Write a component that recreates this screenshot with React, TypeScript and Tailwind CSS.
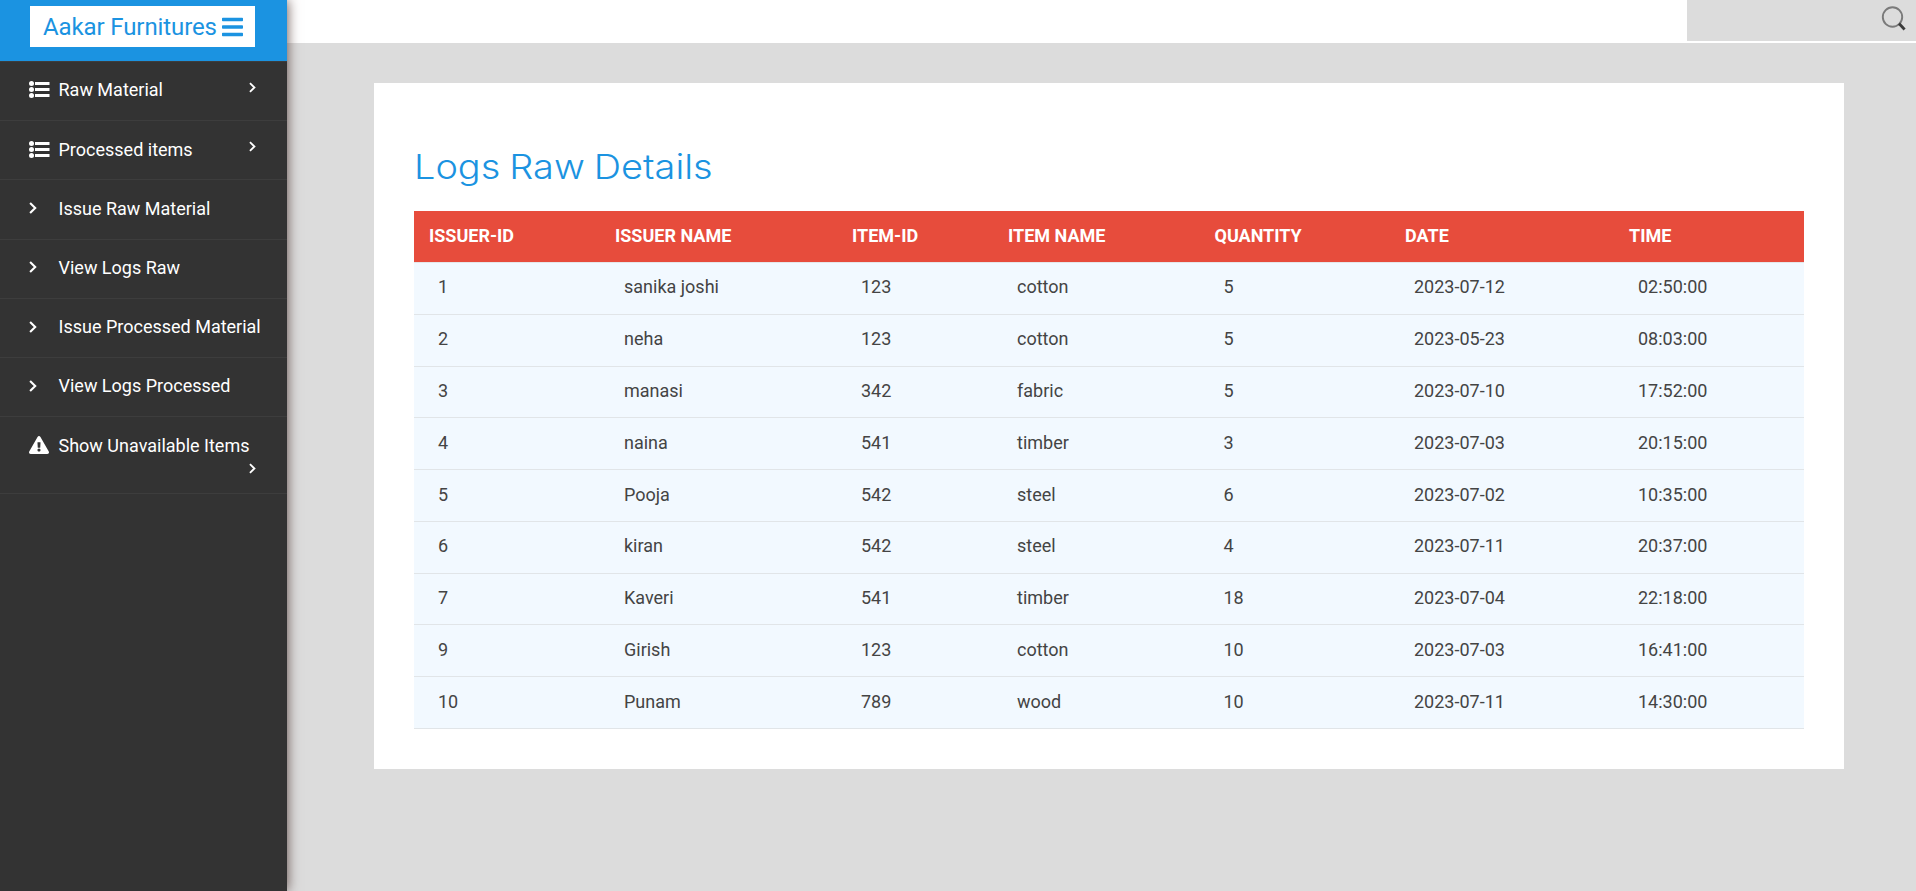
import React from "react";
import { FaBars, FaExclamationTriangle } from "react-icons/fa";

const columns = ["ISSUER-ID", "ISSUER NAME", "ITEM-ID", "ITEM NAME", "QUANTITY", "DATE", "TIME"];

const rows = [
  ["1", "sanika joshi", "123", "cotton", "5", "2023-07-12", "02:50:00"],
  ["2", "neha", "123", "cotton", "5", "2023-05-23", "08:03:00"],
  ["3", "manasi", "342", "fabric", "5", "2023-07-10", "17:52:00"],
  ["4", "naina", "541", "timber", "3", "2023-07-03", "20:15:00"],
  ["5", "Pooja", "542", "steel", "6", "2023-07-02", "10:35:00"],
  ["6", "kiran", "542", "steel", "4", "2023-07-11", "20:37:00"],
  ["7", "Kaveri", "541", "timber", "18", "2023-07-04", "22:18:00"],
  ["9", "Girish", "123", "cotton", "10", "2023-07-03", "16:41:00"],
  ["10", "Punam", "789", "wood", "10", "2023-07-11", "14:30:00"],
];

const grid = "grid grid-cols-[186px_237px_156px_206.5px_190.5px_224px_1fr]";

function Chevron({ className = "" }: { className?: string }) {
  return (
    <svg viewBox="0 0 8 12" className={className} fill="none" stroke="currentColor" strokeWidth="2.1">
      <path d="M1.1 1 6.2 6 1.1 11" />
    </svg>
  );
}

function ListIcon() {
  return (
    <svg viewBox="0 0 21 17" className="h-[17px] w-[21px]" fill="currentColor">
      <circle cx="2.5" cy="2.5" r="2.5" />
      <circle cx="2.5" cy="8.5" r="2.5" />
      <circle cx="2.5" cy="14.5" r="2.5" />
      <path d="M6 1h14.5v3H6zM6 7h14.5v3H6zM6 13h14.5v3H6z" />
    </svg>
  );
}

function MenuItem({ label, icon, arrow }: { label: string; icon?: React.ReactNode; arrow?: boolean }) {
  return (
    <li className="flex h-[59.2px] items-start border-b border-[#3d3d3d] pl-[29px] pr-8 pt-[14.4px]">
      <span className="flex h-[27px] w-[29.5px] shrink-0 items-center">
        {icon ?? <Chevron className="h-3 w-2" />}
      </span>
      <span className="grow whitespace-nowrap leading-[27px]">{label}</span>
      {arrow && <Chevron className="-mr-[0.5px] mt-[5.5px] h-[11px] w-[7px] shrink-0" />}
    </li>
  );
}

function Sidebar() {
  return (
    <aside className="z-10 flex w-[287px] shrink-0 flex-col bg-[#333] text-lg text-white shadow-[0_0_12px_#5f4a46]">
      <div className="h-[61px] bg-[#1b93e1] pl-[30px] pt-[6px]">
        <div className="flex h-[41px] w-[225px] items-center bg-white pl-[13px] text-2xl text-[#1b93e1]">
          <span className="w-[179px] shrink-0 whitespace-nowrap tracking-[-0.11px]">Aakar Furnitures</span>
          <FaBars className="size-6" preserveAspectRatio="xMinYMid meet" />
        </div>
      </div>
      <ul className="border-t border-[#3d3d3d]">
        <MenuItem label="Raw Material" icon={<ListIcon />} arrow />
        <MenuItem label="Processed items" icon={<ListIcon />} arrow />
        <MenuItem label="Issue Raw Material" />
        <MenuItem label="View Logs Raw" />
        <MenuItem label="Issue Processed Material" />
        <MenuItem label="View Logs Processed" />
        <li className="h-[77px] border-b border-[#3d3d3d] pl-[29px] pr-8 pt-[15px]">
          <div className="flex h-[27px] items-center">
            <span className="w-[29.5px]">
              <FaExclamationTriangle className="mb-0.5 size-[20px]" />
            </span>
            <span className="leading-[27px]">Show Unavailable Items</span>
          </div>
          <Chevron className="-mr-[0.5px] ml-auto mt-[4px] h-[11px] w-[7px]" />
        </li>
      </ul>
    </aside>
  );
}

function TopBar() {
  return (
    <header className="flex h-[43px] justify-end bg-white">
      <div className="flex h-[41px] w-[229px] justify-end bg-[#dcdcdc] pr-[10px] pt-[5px]">
        <svg viewBox="0 0 25 26" className="h-[26px] w-[25px]" fill="none">
          <circle cx="11.5" cy="12" r="9.7" stroke="#7a7a7a" strokeWidth="1.9" />
          <path d="M18 18.5 23.6 24.5" stroke="#3a3a3a" strokeWidth="2.8" />
        </svg>
      </div>
    </header>
  );
}

export default function App() {
  return (
    <div className="flex h-[891px] w-full overflow-hidden bg-[#dcdcdc] font-[Roboto,sans-serif]">
      <Sidebar />
      <div className="grow">
        <TopBar />
        <main className="ml-[87px] mt-10 h-[686px] w-[1470px] bg-white px-10 pt-[60px]">
          <h1 className="h-[68px] w-fit origin-left scale-x-[1.115] whitespace-nowrap font-[Inter,sans-serif] text-[34px] font-light leading-[48px] [word-spacing:-1.5px] text-[#1b93e1]">
            Logs Raw Details
          </h1>
          <div className="text-lg">
            <div className={`${grid} h-[51px] items-center bg-[#e74c3c] pb-[2px] pl-[15px] font-bold text-white`}>
              {columns.map((c) => (
                <div key={c}>{c}</div>
              ))}
            </div>
            <div className="border-t border-[#e4e7ea] text-[#444]">
              {rows.map((r) => (
                <div
                  key={r[0]}
                  className={`${grid} h-[51.78px] items-center border-b border-[#e1e5e8] bg-[#f2f9ff] pb-[2.8px] pl-[24px]`}
                >
                  {r.map((v, i) => (
                    <div key={i} className="leading-[27px]">
                      {v}
                    </div>
                  ))}
                </div>
              ))}
            </div>
          </div>
        </main>
      </div>
    </div>
  );
}
